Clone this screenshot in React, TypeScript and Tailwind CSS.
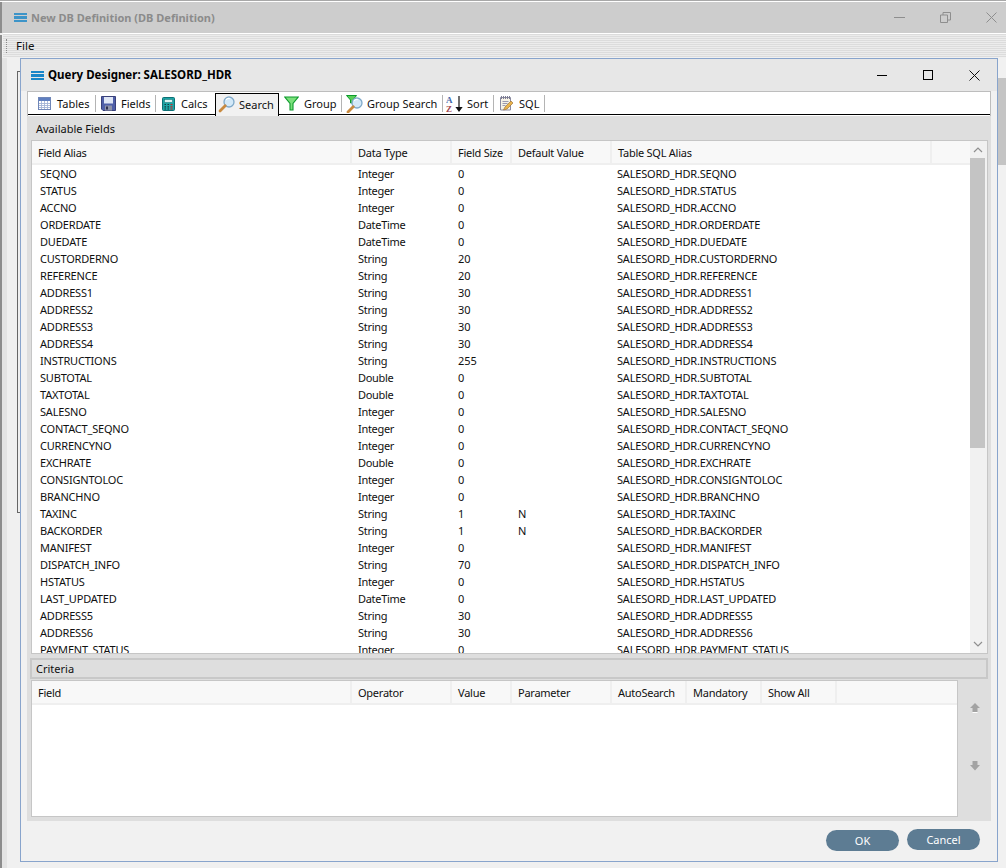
import React from "react";

const rows: [string, string, string, string][] = [
  ["SEQNO", "Integer", "0", ""],
  ["STATUS", "Integer", "0", ""],
  ["ACCNO", "Integer", "0", ""],
  ["ORDERDATE", "DateTime", "0", ""],
  ["DUEDATE", "DateTime", "0", ""],
  ["CUSTORDERNO", "String", "20", ""],
  ["REFERENCE", "String", "20", ""],
  ["ADDRESS1", "String", "30", ""],
  ["ADDRESS2", "String", "30", ""],
  ["ADDRESS3", "String", "30", ""],
  ["ADDRESS4", "String", "30", ""],
  ["INSTRUCTIONS", "String", "255", ""],
  ["SUBTOTAL", "Double", "0", ""],
  ["TAXTOTAL", "Double", "0", ""],
  ["SALESNO", "Integer", "0", ""],
  ["CONTACT_SEQNO", "Integer", "0", ""],
  ["CURRENCYNO", "Integer", "0", ""],
  ["EXCHRATE", "Double", "0", ""],
  ["CONSIGNTOLOC", "Integer", "0", ""],
  ["BRANCHNO", "Integer", "0", ""],
  ["TAXINC", "String", "1", "N"],
  ["BACKORDER", "String", "1", "N"],
  ["MANIFEST", "Integer", "0", ""],
  ["DISPATCH_INFO", "String", "70", ""],
  ["HSTATUS", "Integer", "0", ""],
  ["LAST_UPDATED", "DateTime", "0", ""],
  ["ADDRESS5", "String", "30", ""],
  ["ADDRESS6", "String", "30", ""],
  ["PAYMENT_STATUS", "Integer", "0", ""],
];

const Lines = ({ dim }: { dim?: boolean }) => (
  <svg width="13" height="9" viewBox="0 0 13 9" className={dim ? "shrink-0 opacity-80" : "shrink-0"}>
    <rect x="0" y="0" width="13" height="2" fill="#1a86c8" />
    <rect x="0" y="3" width="13" height="3" fill="#1a86c8" />
    <rect x="0" y="7" width="13" height="2" fill="#1a86c8" />
  </svg>
);

const Magnifier = () => (
  <>
    <circle cx="11" cy="6" r="5" fill="#d3e9f8" stroke="#7fa9c9" strokeWidth="1.300" />
    <path d="M8 4c.8-1.200 2.400-1.800 3.800-1.300" stroke="#fff" strokeWidth="1.300" fill="none" />
    <path d="M7.200 9.800 2 15" stroke="#c98a3f" strokeWidth="2.800" strokeLinecap="round" />
  </>
);

const icons: Record<string, React.ReactNode> = {
  Tables: (
    <svg width="13" height="13" viewBox="0 0 13 13" className="shrink-0">
      <rect x=".5" y=".5" width="12" height="12" fill="#fff" stroke="#6f86b8" />
      <rect x="1" y="1" width="11" height="3" fill="#5f7fc0" />
      <path d="M1 6.500h11M1 8.500h11M1 10.500h11M3.500 4v8M6.500 4v8M9.500 4v8" stroke="#a3b3d6" strokeWidth=".9" />
    </svg>
  ),
  Fields: (
    <svg width="15" height="15" viewBox="0 0 15 15" className="shrink-0">
      <path d="M.5.5h14v14H2L.5 13z" fill="#4f5fa8" stroke="#39407a" />
      <rect x="3" y="1" width="9" height="6.500" fill="#dfe6f5" />
      <rect x="4" y="9.500" width="7" height="5" fill="#8f93a8" />
      <rect x="5" y="10.500" width="2" height="3" fill="#2c2f50" />
    </svg>
  ),
  Calcs: (
    <svg width="13" height="14" viewBox="0 0 13 14" className="shrink-0">
      <rect x=".5" y=".5" width="12" height="13" rx="1" fill="#1ba5a5" stroke="#0d6f74" />
      <rect x="2.500" y="2.500" width="8" height="3" fill="#d8f3f1" stroke="#0d6f74" strokeWidth=".5" />
      <path d="M2.500 7.500H4M5.500 7.500H7M2.500 9.800H4M5.500 9.800H7M2.500 12H4M5.500 12H7" stroke="#12393f" strokeWidth="1.200" />
      <path d="M8.500 7.500h2M8.500 9.800h2M8.500 12h2" stroke="#d22" strokeWidth="1.200" />
    </svg>
  ),
  Search: (
    <svg width="17" height="17" viewBox="0 0 17 17" className="shrink-0">
      <Magnifier />
    </svg>
  ),
  Group: (
    <svg width="15" height="15" viewBox="0 0 15 15" className="shrink-0">
      <path d="M.8 1h13.400L9 7.500V14H6V7.500z" fill="#7be07b" stroke="#0c9a2c" strokeWidth="1.100" />
    </svg>
  ),
  "Group Search": (
    <svg width="17" height="18" viewBox="0 0 17 18" className="shrink-0">
      <path d="M.5.500h10L7 5v3H4.500V5z" fill="#58cf58" stroke="#0c9a2c" />
      <g transform="translate(0 2)">
        <Magnifier />
      </g>
    </svg>
  ),
  Sort: (
    <svg width="17" height="18" viewBox="0 0 17 18" className="shrink-0">
      <text x="0" y="8" fontSize="9" fontWeight="700" fill="#3f66a8" fontFamily="'Liberation Serif', serif">A</text>
      <text x="0" y="17" fontSize="9" fontWeight="700" fill="#a2474f" fontFamily="'Liberation Serif', serif">Z</text>
      <path d="M13 1v14M10.500 12.500 13 16l2.500-3.500z" stroke="#111" strokeWidth="1.200" fill="#111" />
    </svg>
  ),
  SQL: (
    <svg width="15" height="17" viewBox="0 0 15 17" className="shrink-0">
      <path d="M1.500 2.500h10V15h-10z" fill="#f6f2e6" stroke="#8a8aa0" />
      <path d="M2.500 1v3M4.500 1v3M6.500 1v3M8.500 1v3M10.500 1v3" stroke="#7c7c92" />
      <path d="M3.500 6.500h6M3.500 8.500h5M3.500 10.500h3" stroke="#9a9ab0" />
      <path d="M4.500 15 6 12l6-6 2 2-6 6z" fill="#e9b44c" stroke="#a2753a" strokeWidth=".7" />
    </svg>
  ),
};

const tabs = [
  { name: "Tables", cls: "w-[68px] pl-[10px] gap-[6px]" },
  { name: "Fields", cls: "w-[60px] pl-[5px] gap-[5px]" },
  { name: "Calcs", cls: "w-[59px] pl-[6px] gap-[6px]", noSep: true },
  { name: "Search", cls: "w-[64px] pl-[2px] gap-[4px]", active: true },
  { name: "Group", cls: "w-[63px] pl-[5px] gap-[5px]" },
  { name: "Group Search", cls: "w-[101px] pl-[4px] gap-[4px]" },
  { name: "Sort", cls: "w-[51px] pl-[3px] gap-[4px]" },
  { name: "SQL", cls: "w-[51px] pl-[5px] gap-[5px]" },
];

const Head = ({ w, children }: { w: string; children?: React.ReactNode }) => (
  <div className={`${w} shrink-0 border-r-2 border-[#efefef] pl-[6px] flex items-center tracking-[-0.25px]`}>
    {children}
  </div>
);

const Chevron = ({ d }: { d: string }) => (
  <svg width="10" height="6" viewBox="0 0 10 6">
    <path d={d} fill="none" stroke="#8f8f8f" strokeWidth="1.200" />
  </svg>
);

export default function App() {
  return (
    <div
      className="relative w-[1006px] h-[868px] overflow-hidden bg-[#f0f0f0] text-[11px] text-[#101010] leading-none"
      style={{ fontFamily: "'Noto Sans', 'Open Sans', sans-serif" }}
    >
      {/* Outer window */}
      <div className="h-[2px] bg-[#a8a8a8] border-b border-white" />
      <div className="h-[31px] bg-[#cdcdcd] flex items-center pl-[12px] pr-[9px] border-l-2 border-[#8d8d8d]">
        <Lines dim />
        <span className="ml-[4px] text-[11px] font-bold text-[#8b8b8b]">New DB Definition (DB Definition)</span>
        <div className="ml-auto flex items-center gap-[35px]">
          <div className="w-[11px] h-px bg-[#8e8e8e]" />
          <svg width="11" height="11" viewBox="0 0 11 11">
            <path d="M.5 3h7v7.500h-7zM3 3V.5h7.500V8H8" fill="none" stroke="#8e8e8e" />
          </svg>
          <svg width="11" height="11" viewBox="0 0 11 11">
            <path d="M.5.5l10 10M10.500.5l-10 10" stroke="#8e8e8e" />
          </svg>
        </div>
      </div>
      <div
        className="h-[24px] ml-[3px] border-t border-white flex items-center text-[11.5px] bg-[#e3e3e3]"
        style={{ backgroundImage: "repeating-linear-gradient(0deg,#dcdcdc 0 1px,#ececec 1px 2px)" }}
      >
        <div className="ml-[3px] w-[2px] h-[14px] border-l border-dotted border-[#8a8a8a]" />
        <span className="ml-[8px]">File</span>
      </div>

      {/* Faint panel of the outer window behind the dialog */}
      <div className="absolute left-0 top-[35px] bottom-0 w-[2px] bg-[#8d8d8d]" />
      <div className="absolute left-[2px] top-[58px] bottom-0 w-[5px] bg-[#e4e4e4]" />
      <div className="absolute left-[17px] top-[71px] h-[442px] w-[3px] border-l border-t border-b border-[#666]" />

      {/* Outer scrollbar */}
      <div className="absolute left-[998px] top-[58px] w-[8px] h-[810px] bg-[#f1f1f1]">
        <div className="h-[20px]" />
        <div className="h-[87px] bg-[#c4c4c4]" />
      </div>

      {/* Query designer window */}
      <div className="absolute left-[20px] top-[58px] w-[978px] h-[804px] border border-[#88a4cc] bg-[#f1f1f1] flex flex-col">
        <div className="h-[32px] shrink-0 bg-[#e7e7e7] flex items-center pl-[10px] pr-[17px]">
          <Lines />
          <span className="ml-[4px] text-[11.5px] font-bold text-black">Query Designer: SALESORD_HDR</span>
          <div className="ml-auto flex items-center gap-[36px]">
            <div className="w-[10px] h-px bg-black" />
            <div className="w-[10px] h-[10px] border border-black" />
            <svg width="11" height="11" viewBox="0 0 11 11">
              <path d="M.5.5l10 10M10.500.5l-10 10" stroke="#111" />
            </svg>
          </div>
        </div>

        <div className="mx-[6px] flex flex-col w-[964px] h-[730px] bg-[#dedede] shrink-0">
          {/* Tabs */}
          <div className="h-[25px] shrink-0 bg-white border-t border-r border-l border-[#bdbdbd] flex items-end relative">
            <div className="absolute left-0 right-0 bottom-px h-px bg-black" />
            {tabs.map((t) => (
              <div
                key={t.name}
                className={
                  t.active
                    ? `${t.cls} relative h-[23px] shrink-0 flex items-center pb-[2px] border border-b-0 border-black bg-[#f1f1f1]`
                    : `${t.cls} relative h-[23px] shrink-0 flex items-center pb-[2px]`
                }
              >
                {icons[t.name]}
                <span className="whitespace-nowrap">{t.name}</span>
                {!t.active && !t.noSep && <div className="absolute right-0 top-[2px] h-[17px] w-px bg-[#b4b4b4]" />}
              </div>
            ))}
          </div>

          {/* Available Fields */}
          <div className="h-[24px] shrink-0 pl-[9px] flex items-center">Available Fields</div>
          <div className="ml-[4px] mr-[3px] h-[514px] shrink-0 border border-[#c6c6c6] bg-white flex overflow-hidden relative">
            <div className="w-[938px] shrink-0 flex flex-col overflow-hidden">
              <div className="h-[24px] shrink-0 flex border-b-2 border-[#efefef] bg-[#f8f8f8]">
                <Head w="w-[320px]">Field Alias</Head>
                <Head w="w-[100px]">Data Type</Head>
                <Head w="w-[60px]">Field Size</Head>
                <Head w="w-[100px]">Default Value</Head>
                <Head w="w-[320px]">Table SQL Alias</Head>
              </div>
              {rows.map((r) => (
                <div key={r[0]} className="h-[17px] shrink-0 flex items-center">
                  <div className="w-[320px] shrink-0 pl-[8px] tracking-[-0.2px]">{r[0]}</div>
                  <div className="w-[100px] shrink-0 pl-[6px] tracking-[-0.3px]">{r[1]}</div>
                  <div className="w-[60px] shrink-0 pl-[6px]">{r[2]}</div>
                  <div className="w-[100px] shrink-0 pl-[6px]">{r[3]}</div>
                  <div className="pl-[5px] whitespace-nowrap tracking-[-0.2px]">SALESORD_HDR.{r[0]}</div>
                </div>
              ))}
            </div>
            <div className="flex-1 bg-[#f1f1f1] flex flex-col items-start">
              <div className="h-[17px] w-[15px] flex items-center justify-center">
                <Chevron d="M1 5l4-4 4 4" />
              </div>
              <div className="w-[15px] h-[290px] bg-[#c4c4c4]" />
              <div className="mt-auto h-[18px] w-[15px] flex items-center justify-center">
                <Chevron d="M1 1l4 4 4-4" />
              </div>
            </div>
          </div>

          {/* Criteria */}
          <div className="mt-[4px] ml-[3px] h-[21px] w-[958px] shrink-0 border-2 border-[#c8c8c8] pl-[4px] flex items-center">Criteria</div>
          <div className="flex flex-1 min-h-0">
            <div className="ml-[4px] mt-px w-[927px] h-[137px] shrink-0 border border-[#c6c6c6] bg-white">
              <div className="h-[24px] flex border-b-2 border-[#efefef] bg-[#f8f8f8]">
                <Head w="w-[320px]">Field</Head>
                <Head w="w-[100px]">Operator</Head>
                <Head w="w-[60px]">Value</Head>
                <Head w="w-[100px]">Parameter</Head>
                <Head w="w-[75px]">AutoSearch</Head>
                <Head w="w-[75px]">Mandatory</Head>
                <Head w="w-[75px]">Show All</Head>
              </div>
            </div>
            <div className="flex-1 relative">
              <svg width="12" height="10" viewBox="0 0 12 10" className="absolute left-[11px] top-[24px]">
                <path d="M6 0l5 5H8.500v4h-5V5H1z" fill="#a3a3a3" />
                <path d="M3.500 9.500h5" stroke="#fff" />
              </svg>
              <svg width="12" height="10" viewBox="0 0 12 10" className="absolute left-[11px] top-[82px]">
                <path d="M3.500 0h5v4H11L6 9.500 1 4h2.500z" fill="#a3a3a3" />
              </svg>
            </div>
          </div>
        </div>

        {/* Footer */}
        <div className="flex-1 relative">
          <button className="absolute left-[805px] top-[9px] w-[73px] h-[21px] rounded-[11px] bg-[#5d7c93] text-white text-[11px]">OK</button>
          <button className="absolute left-[886px] top-[8px] w-[73px] h-[21px] rounded-[11px] bg-[#5d7c93] text-white text-[11px]">Cancel</button>
        </div>
      </div>
    </div>
  );
}
